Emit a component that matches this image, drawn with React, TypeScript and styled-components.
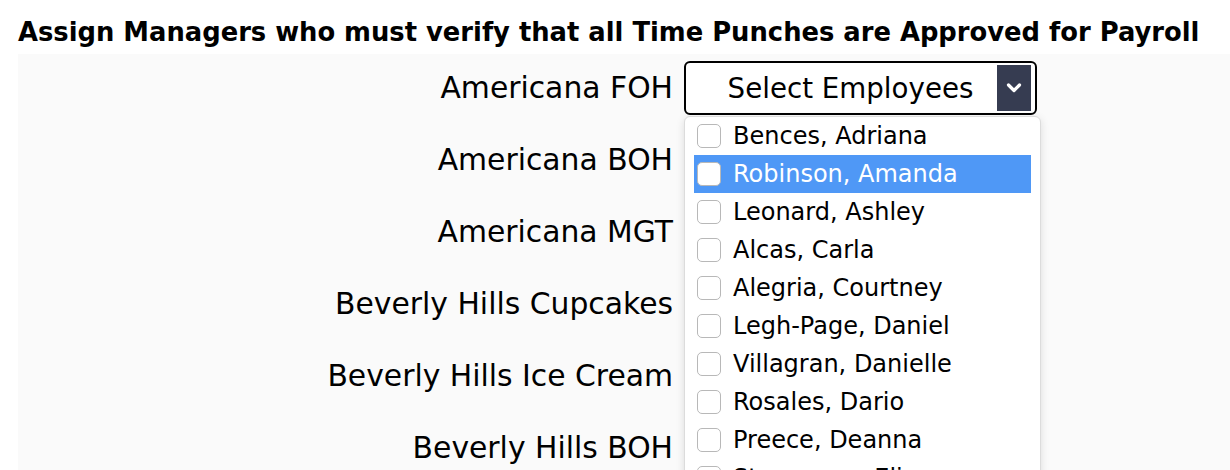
import { FC } from 'react'
import styled, { createGlobalStyle } from 'styled-components'

const GlobalStyle = createGlobalStyle`
  html, body {
    margin: 0;
    padding: 0;
    background: #ffffff;
    font-family: "DejaVu Sans", Verdana, sans-serif;
    color: #000;
  }
  * {
    box-sizing: border-box;
  }
`

const stores = [
  'Americana FOH',
  'Americana BOH',
  'Americana MGT',
  'Beverly Hills Cupcakes',
  'Beverly Hills Ice Cream',
  'Beverly Hills BOH'
]

const employees = [
  'Bences, Adriana',
  'Robinson, Amanda',
  'Leonard, Ashley',
  'Alcas, Carla',
  'Alegria, Courtney',
  'Legh-Page, Daniel',
  'Villagran, Danielle',
  'Rosales, Dario',
  'Preece, Deanna',
  'Stevenson, Elisa'
]

const ChevronDown: FC = () => (
  <svg width="18" height="12" viewBox="0 0 18 12">
    <path d="M3.5 3 L9 8.5 L14.5 3" fill="none" stroke="#ffffff" strokeWidth="3.2" strokeLinecap="round" strokeLinejoin="round" />
  </svg>
)

const App: FC = () => {
  return (
    <Page>
      <GlobalStyle />
      <Title>Assign Managers who must verify that all Time Punches are Approved for Payroll</Title>
      <Panel>
        {stores.map((store, i) => (
          <Row key={store}>
            <StoreLabel>{store}</StoreLabel>
            <SelectWrap>
              <SelectBox>
                <SelectText>Select Employees</SelectText>
                <Caret>
                  <ChevronDown />
                </Caret>
              </SelectBox>
              {i === 0 && (
                <Dropdown>
                  {employees.map((name, j) => (
                    <Option key={name} $active={j === 1}>
                      <Check />
                      {name}
                    </Option>
                  ))}
                </Dropdown>
              )}
            </SelectWrap>
          </Row>
        ))}
      </Panel>
    </Page>
  )
}

const Page = styled.div`
  width: 1230px;
  height: 470px;
  overflow: hidden;
`

const Title = styled.h3`
  margin: 0;
  padding: 17px 0 0 18px;
  height: 54px;
  font-size: 25.8px;
  font-weight: bold;
  line-height: 30px;
  white-space: nowrap;
`

const Panel = styled.div`
  margin-left: 18px;
  background: #fafafa;
  display: flex;
  flex-direction: column;
  gap: 18px;
  padding-top: 7px;
  height: 416px;
`

const Row = styled.div`
  display: grid;
  grid-template-columns: 655px 357px;
  column-gap: 11px;
  align-items: center;
  flex-shrink: 0;
`

const StoreLabel = styled.div`
  text-align: right;
  font-size: 29.8px;
  line-height: 36px;
  white-space: nowrap;
`

const SelectWrap = styled.div`
  position: relative;
`

const SelectBox = styled.div`
  width: 353px;
  height: 54px;
  border: 2px solid #000;
  border-radius: 6px;
  background: #fff;
  display: flex;
  align-items: center;
  padding: 0 4px 0 0;
`

const SelectText = styled.div`
  flex: 1;
  text-align: center;
  font-size: 27.7px;
  padding-left: 18px;
`

const Caret = styled.div`
  width: 34px;
  height: 46px;
  background: #363c51;
  display: flex;
  align-items: center;
  justify-content: center;
`

const Dropdown = styled.div`
  position: absolute;
  top: 55px;
  left: 0;
  width: 357px;
  background: #fff;
  border: 1px solid #dcdcdc;
  border-radius: 6px;
  box-shadow: 0 2px 8px rgba(0, 0, 0, 0.12);
  padding: 0 9px 0 9px;
  z-index: 2;
`

const Option = styled.div<{ $active?: boolean }>`
  height: 38px;
  display: flex;
  align-items: center;
  gap: 12px;
  padding-left: 3px;
  font-size: 24px;
  background: ${p => (p.$active ? '#4f98f6' : 'transparent')};
  color: ${p => (p.$active ? '#ffffff' : '#000000')};
  white-space: nowrap;
`

const Check = styled.span`
  width: 24px;
  height: 24px;
  border: 1px solid #b8b8b8;
  border-radius: 5px;
  background: #fff;
  flex-shrink: 0;
`

export default App
